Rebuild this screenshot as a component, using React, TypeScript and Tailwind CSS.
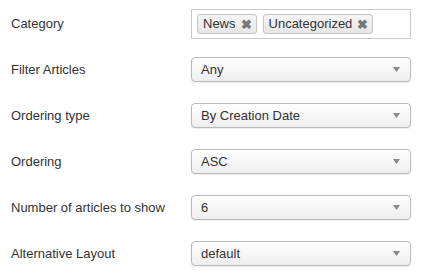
import React from 'react';

const rows = [
  { label: 'Filter Articles', value: 'Any' },
  { label: 'Ordering type', value: 'By Creation Date' },
  { label: 'Ordering', value: 'ASC' },
  { label: 'Number of articles to show', value: '6' },
  { label: 'Alternative Layout', value: 'default' },
];

const Tag = ({ text }: { text: string }) => (
  <div className="flex items-center h-[20px] pl-[5px] pr-[4px] border border-[#c4c4c4] rounded-[3px] bg-gradient-to-b from-[#f6f6f6] to-[#e6e6e6] text-[13px] text-[#333] gap-[5px]">
    <span>{text}</span>
    <span className="text-[#777] text-[13px] font-bold leading-none">✖</span>
  </div>
);

const Select = ({ value }: { value: string }) => (
  <div className="flex items-center justify-between w-[220px] h-[25px] pl-[9px] pr-[10px] border border-[#b9b9b9] rounded-[4px] bg-gradient-to-b from-white to-[#eeeeee] shadow-[0_1px_1px_rgba(0,0,0,0.08)] text-[13px] text-[#333]">
    <span>{value}</span>
    <svg width="7" height="5" viewBox="0 0 7 5">
      <path d="M0 0 L7 0 L3.5 5 Z" fill="#888" />
    </svg>
  </div>
);

export default function App() {
  return (
    <div className="w-[432px] h-[278px] bg-white px-[11px] pt-[9px] font-['Liberation_Sans',Arial,sans-serif]">
      <div className="flex items-center">
        <div className="w-[180px] text-[13px] text-[#333]">Category</div>
        <div className="flex items-center gap-[6px] w-[220px] h-[30px] px-[5px] border border-[#c8c8c8] bg-white">
          <Tag text="News" />
          <Tag text="Uncategorized" />
        </div>
      </div>
      <div className="flex flex-col gap-[21px] mt-[18px]">
        {rows.map((r) => (
          <div key={r.label} className="flex items-center">
            <div className="w-[180px] text-[13px] text-[#333]">{r.label}</div>
            <Select value={r.value} />
          </div>
        ))}
      </div>
    </div>
  );
}
